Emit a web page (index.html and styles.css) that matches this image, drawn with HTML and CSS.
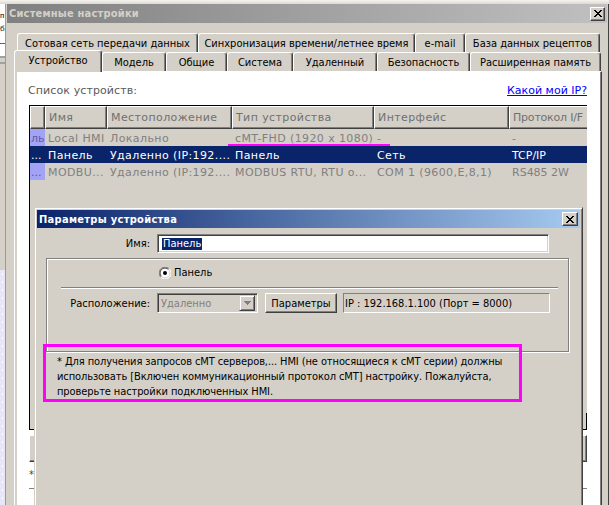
FILE: index.html
```html
<!DOCTYPE html>
<html lang="ru">
<head>
<meta charset="utf-8">
<title>Системные настройки</title>
<link rel="stylesheet" href="styles.css">
</head>
<body>
<div class="screen">
  <div class="topstrip"></div>
  <div class="main-row">
    <div class="behind">
      <div class="bh-white">
        <div class="bh-text">п</div>
        <div class="bh-text">б</div>
        <div class="bh-rule"></div>
      </div>
      <div class="bh-bars"></div>
      <div class="bh-gray"></div>
      <div class="bh-lav"></div>
    </div>

    <div class="win">
      <div class="caption">
        <span class="cap-title">Системные настройки</span>
        <span class="xbtn xbtn-main">
          <svg width="8" height="7" viewBox="0 0 8 7" shape-rendering="crispEdges"><path d="M0 0h2v1h-2zM6 0h2v1h-2zM1 1h2v1h-2zM5 1h2v1h-2zM2 2h4v1h-4zM3 3h2v1h-2zM2 4h4v1h-4zM1 5h2v1h-2zM5 5h2v1h-2zM0 6h2v1h-2zM6 6h2v1h-2z" fill="#000"/></svg>
        </span>
      </div>
      <div class="winbody">
        <div class="tabrow tabrow-back">
          <div class="tab tab-cell">Сотовая сеть передачи данных</div>
          <div class="tab tab-sync">Синхронизация времени/летнее время</div>
          <div class="tab tab-mail">e-mail</div>
          <div class="tab tab-recipe">База данных рецептов</div>
        </div>
        <div class="tabrow">
          <div class="tab tab-device tab-active">Устройство</div>
          <div class="tab tab-model">Модель</div>
          <div class="tab tab-general">Общие</div>
          <div class="tab tab-system">Система</div>
          <div class="tab tab-remote">Удаленный</div>
          <div class="tab tab-security">Безопасность</div>
          <div class="tab tab-memory">Расширенная память</div>
        </div>
        <div class="panel">
          <div class="page">
            <div class="listhead">
              <span class="list-label">Список устройств:</span>
              <span class="link">Какой мой IP?</span>
            </div>
            <div class="grid">
              <div class="grow ghead">
                <div class="cell col0"></div>
                <div class="cell col1">Имя</div>
                <div class="cell col2">Местоположение</div>
                <div class="cell col3">Тип устройства</div>
                <div class="cell col4">Интерфейс</div>
                <div class="cell col5">Протокол I/F</div>
              </div>
              <div class="grow row-dim">
                <div class="cell col0">ль</div>
                <div class="cell col1">Local HMI</div>
                <div class="cell col2">Локально</div>
                <div class="cell col3">cMT-FHD (1920 x 1080)</div>
                <div class="cell col4">-</div>
                <div class="cell col5">-</div>
              </div>
              <div class="grow row-sel">
                <div class="cell col0">...</div>
                <div class="cell col1">Панель</div>
                <div class="cell col2">Удаленно (IP:192....</div>
                <div class="cell col3">Панель</div>
                <div class="cell col4">Сеть</div>
                <div class="cell col5">TCP/IP</div>
              </div>
              <div class="grow row-dim">
                <div class="cell col0">...</div>
                <div class="cell col1">MODBU...</div>
                <div class="cell col2">Удаленно (IP:192....</div>
                <div class="cell col3">MODBUS RTU, RTU o...</div>
                <div class="cell col4">COM 1 (9600,E,8,1)</div>
                <div class="cell col5">RS485 2W</div>
              </div>
              <div class="gfill"></div>
              <div class="gfoot"></div>
            </div>
            <div class="below-btn"></div>
            <div class="below-note">* </div>
            <div class="below-rule"></div>
          </div>
        </div>
      </div>
    </div>
  </div>

  <div class="dialog">
    <div class="dlg-caption">
      <span class="dlg-title">Параметры устройства</span>
      <span class="xbtn xbtn-dlg">
        <svg width="8" height="7" viewBox="0 0 8 7" shape-rendering="crispEdges"><path d="M0 0h2v1h-2zM6 0h2v1h-2zM1 1h2v1h-2zM5 1h2v1h-2zM2 2h4v1h-4zM3 3h2v1h-2zM2 4h4v1h-4zM1 5h2v1h-2zM5 5h2v1h-2zM0 6h2v1h-2zM6 6h2v1h-2z" fill="#000"/></svg>
      </span>
    </div>
    <div class="dlg-body">
      <div class="name-row">
        <span class="field-label">Имя:</span>
        <div class="name-input"><span class="sel-text">Панель</span></div>
      </div>
      <div class="group">
        <div class="radio-row">
          <svg class="radio" width="12" height="12" viewBox="0 0 12 12">
            <circle cx="6" cy="6" r="5.5" fill="#fff"/>
            <path d="M10.2 1.8 A5.5 5.5 0 0 0 1.8 10.2" fill="none" stroke="#808080" stroke-width="1"/>
            <path d="M1.8 10.2 A5.5 5.5 0 0 0 10.2 1.8" fill="none" stroke="#fff" stroke-width="1"/>
            <path d="M9.5 2.5 A4.5 4.5 0 0 0 2.5 9.5" fill="none" stroke="#404040" stroke-width="1"/>
            <path d="M2.5 9.5 A4.5 4.5 0 0 0 9.5 2.5" fill="none" stroke="#d4d0c8" stroke-width="1"/>
            <circle cx="6" cy="6" r="2" fill="#000"/>
          </svg>
          <span>Панель</span>
        </div>
        <div class="sep"></div>
        <div class="loc-row">
          <span class="loc-label">Расположение:</span>
          <div class="combo">
            <span class="combo-text">Удаленно</span>
            <span class="combo-btn">
              <svg width="7" height="4" viewBox="0 0 7 4" shape-rendering="crispEdges"><path d="M0 0h7v1h-7zM1 1h5v1h-5zM2 2h3v1h-3zM3 3h1v1h-1z" fill="#808080"/></svg>
            </span>
          </div>
          <div class="btn">Параметры</div>
          <div class="ro-field">IP : 192.168.1.100 (Порт = 8000)</div>
        </div>
      </div>
      <div class="note">* Для получения запросов cMT серверов,... HMI (не относящиеся к cMT серии) должны<br>использовать [Включен коммуникационный протокол cMT] настройку. Пожалуйста,<br>проверьте настройки подключенных HMI.</div>
    </div>
  </div>

  <div class="mark-underline"></div>
  <div class="mark-box"></div>
</div>
</body>
</html>
```

FILE: styles.css
```css
* { box-sizing: border-box; margin: 0; padding: 0; }
html, body { width: 609px; height: 505px; overflow: hidden; }
body {
  font-family: "DejaVu Sans Condensed", "Liberation Sans", sans-serif;
  font-size: 11px;
  color: #000;
  background: #d4d0c8;
}
.screen {
  position: relative;
  width: 609px;
  height: 505px;
  overflow: hidden;
  background: #d4d0c8;
  display: flex;
  flex-direction: column;
}
.topstrip {
  height: 4px;
  flex: none;
  background: linear-gradient(to bottom, #f4f3ee, #dcdad2);
}
.main-row { display: flex; flex: 1; min-height: 0; }

/* window behind, left edge */
.behind { width: 5px; flex: none; display: flex; flex-direction: column; overflow: hidden; }
.bh-white { height: 52px; flex: none; background: #fff; padding-top: 5px; }
.bh-text {
  height: 13px; line-height: 13px; white-space: nowrap;
  font-family: "Liberation Sans", sans-serif; font-size: 8px;
}
.bh-rule { margin-top: 8px; height: 1px; background: #316ac5; }
.bh-bars { height: 8px; flex: none; background: #d4d0c8; border-top: 2px solid #a0a0a0; border-bottom: 2px solid #a0a0a0; }
.bh-gray { height: 206px; flex: none; background: #d4d0c8; }
.bh-lav {
  flex: 1;
  background-color: #e6e6f8;
  background-image: radial-gradient(circle, #fff 0.8px, transparent 1px);
  background-size: 5px 8px;
}

/* main window */
.win {
  flex: 1; min-width: 0;
  display: flex; flex-direction: column;
  border-left: 1px solid #9a9a9a;
  border-right: 1px solid #404040;
  padding: 0 1px;
  background: #d4d0c8;
}
.caption {
  height: 19px; flex: none;
  display: flex; align-items: center; justify-content: space-between;
  padding: 0 2px 0 2px;
  background: linear-gradient(to right, #808080, #c0c0c0);
}
.cap-title { font-weight: bold; color: #d4d0c8; font-size: 11px; letter-spacing: 0.2px; }
.xbtn {
  display: flex; align-items: center; justify-content: center;
  background: #d4d0c8;
  border: 1px solid; border-color: #fff #404040 #404040 #fff;
  box-shadow: inset -1px -1px #808080;
}
.xbtn-main { width: 15px; height: 14px; }
.xbtn-dlg { width: 16px; height: 14px; }

.winbody {
  flex: 1; min-height: 0;
  display: flex; flex-direction: column;
  padding: 10px 5px 0 7px;
}
.tabrow { display: flex; height: 19px; flex: none; }
.tabrow-back { margin-left: 3px; }
.tab {
  height: 19px;
  display: flex; align-items: center; justify-content: center;
  background: #d4d0c8;
  border-top: 1px solid #fff; border-left: 1px solid #fff; border-right: 1px solid #404040;
  border-radius: 3px 3px 0 0;
  box-shadow: inset -1px 0 #808080;
  white-space: nowrap;
  padding-top: 1px;
  flex: none;
}
.tab-active { position: relative; z-index: 2; height: 22px; margin-top: -2px; margin-bottom: -1px; padding-top: 0; padding-bottom: 3px; }
.tab-cell { width: 181px; }
.tab-sync { width: 217px; }
.tab-mail { width: 50px; }
.tab-recipe { width: 135px; }
.tab-device { width: 88px; }
.tab-model { width: 64px; }
.tab-general { width: 61px; }
.tab-system { width: 66px; }
.tab-remote { width: 84px; }
.tab-security { width: 93px; }
.tab-memory { width: 131px; }

.panel {
  flex: 1; min-height: 0; display: flex;
  background: #d4d0c8;
  border-top: 1px solid #fff; border-left: 1px solid #fff; border-right: 1px solid #404040;
  padding: 0 1px 0 2px;
  box-shadow: inset -1px 0 #808080;
}
.page {
  flex: 1; min-width: 0;
  background: #fff;
  padding: 0 13px 0 12px;
  display: flex; flex-direction: column;
}
.listhead {
  height: 33px; flex: none;
  display: flex; justify-content: space-between; align-items: flex-end;
  padding-bottom: 8px; line-height: 13px;
  font-family: "DejaVu Sans", sans-serif;
}
.list-label { color: #5a5a5a; margin-left: -1px; letter-spacing: 0.1px; }
.link { color: #0000ff; text-decoration: underline; }

.grid {
  height: 325px; flex: none;
  display: flex; flex-direction: column;
  background: #d4d0c8;
  border-left: 1px solid #000; border-top: 1px solid #000; border-bottom: 1px solid #000;
  font-family: "DejaVu Sans", sans-serif;
  letter-spacing: 0.4px;
}
.grow { display: flex; height: 17px; flex: none; }
.ghead { height: 23px; }
.cell {
  flex: none; overflow: hidden; white-space: nowrap;
  padding: 2px 0 0 3px; line-height: 15px;
}
.col0 { width: 15px; padding-left: 1px; letter-spacing: 0; }
.col1 { width: 62px; }
.col2 { width: 125px; }
.col3 { width: 142px; }
.col4 { width: 135px; }
.col5 { flex: 1; min-width: 0; letter-spacing: 0; }
.ghead .cell {
  border-top: 1px solid #fff; border-left: 1px solid #fff;
  border-right: 1px solid #404040; border-bottom: 1px solid #404040;
  box-shadow: inset -1px -1px #808080;
  padding: 2px 0 0 3px; line-height: 17px;
  color: #707070; background: #d4d0c8;
}
.ghead .col5 { border-right: 0; box-shadow: inset 0 -1px #808080; letter-spacing: -0.2px; }
.row-dim .cell { color: #808080; }
.row-dim .col0 { background: #a3a3f6; color: #5a5aa8; }
.row-sel { background: #0a246a; }
.row-sel .cell { color: #fff; }
.gfill { flex: 1; }
.gfoot { height: 16px; flex: none; box-shadow: inset -1px 0 #000; }

.below-btn {
  height: 27px; margin-top: 5px; flex: none;
  border: 1px solid; border-color: #fff #404040 #404040 #fff;
  box-shadow: inset -1px -1px #808080;
  background: #d4d0c8;
}
.below-note { margin-top: 6px; line-height: 13px; color: #404040; flex: none; }
.below-rule { margin-top: 7px; height: 2px; border-top: 1px solid #808080; border-bottom: 1px solid #fff; flex: none; }

/* dialog */
.dialog {
  position: absolute; left: 34px; top: 207px;
  width: 549px; height: 320px;
  background: #d4d0c8;
  border: 1px solid; border-color: #d4d0c8 #404040 #404040 #d4d0c8;
  box-shadow: inset 1px 1px #fff, inset -1px -1px #808080;
  padding: 2px;
  display: flex; flex-direction: column;
  z-index: 5;
}
.dlg-caption {
  height: 18px; flex: none;
  display: flex; align-items: center; justify-content: space-between;
  padding: 0 2px;
  background: linear-gradient(to right, #0a246a, #a6caf0);
}
.dlg-title { color: #fff; font-weight: bold; font-size: 11px; letter-spacing: 0.3px; }
.dlg-body { padding-top: 6px; }
.name-row { display: flex; align-items: center; height: 19px; }
.field-label { width: 113px; text-align: right; flex: none; }
.name-input {
  margin-left: 7px; width: 392px; height: 19px; flex: none;
  background: #fff;
  border: 1px solid; border-color: #808080 #fff #fff #808080;
  box-shadow: inset 1px 1px #404040, inset -1px -1px #d4d0c8;
  padding: 0 3px 0 4px;
  display: flex; align-items: center;
}
.sel-text { background: #0a246a; color: #fff; line-height: 12px; padding: 0 1px; }

.group {
  margin: 5px 0 0 9px;
  width: 523px; height: 94px;
  border: 1px solid #808080;
  box-shadow: inset 1px 1px #fff, 1px 1px #fff;
  padding-top: 7px;
}
.radio-row { display: flex; align-items: center; height: 13px; margin-left: 112px; gap: 3px; }
.radio { flex: none; }
.sep { margin: 8px 10px 0 14px; height: 2px; border-top: 1px solid #808080; border-bottom: 1px solid #fff; }
.loc-row { display: flex; align-items: center; height: 20px; margin-top: 4px; }
.loc-label { width: 103px; text-align: right; flex: none; }
.combo {
  margin-left: 7px; width: 101px; height: 20px; flex: none;
  border: 1px solid; border-color: #808080 #fff #fff #808080;
  box-shadow: inset 1px 1px #404040, inset -1px -1px #d4d0c8;
  padding: 2px 2px 2px 3px;
  display: flex; align-items: center; justify-content: space-between;
}
.combo-text { color: #808080; }
.combo-btn {
  width: 16px; height: 16px; flex: none;
  display: flex; align-items: center; justify-content: center;
  border: 1px solid; border-color: #d4d0c8 #404040 #404040 #d4d0c8;
  box-shadow: inset 1px 1px #fff, inset -1px -1px #808080;
}
.btn {
  margin-left: 7px; width: 72px; height: 20px; flex: none;
  display: flex; align-items: center; justify-content: center;
  border: 1px solid; border-color: #fff #404040 #404040 #fff;
  box-shadow: inset -1px -1px #808080;
}
.ro-field {
  margin-left: 6px; width: 207px; height: 20px; flex: none;
  border: 1px solid; border-color: #808080 #fff #fff #808080;
  padding-left: 1px;
  display: flex; align-items: center;
  white-space: nowrap; overflow: hidden;
}
.note { margin-top: 2px; padding-left: 20px; line-height: 15px; white-space: nowrap; letter-spacing: -0.1px; }

/* magenta annotations over the screenshot */
.mark-underline {
  position: absolute; left: 228px; top: 144px;
  width: 162px; height: 2px; background: #ff00ff; z-index: 6;
}
.mark-box {
  position: absolute; left: 43px; top: 344px;
  width: 479px; height: 58px;
  border: 3px solid #ff00ff; z-index: 6;
}
```
